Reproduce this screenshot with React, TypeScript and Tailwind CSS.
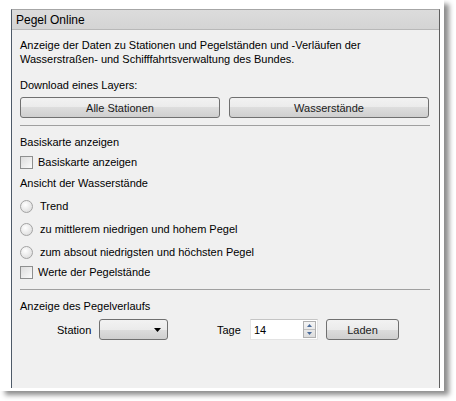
import React from "react";

const font = { fontFamily: '"Liberation Sans", Arial, sans-serif' };

function Radio({ label }: { label: string }) {
  return (
    <div className="mt-[3px] flex h-[20px] items-center gap-[7px]">
      <span className="h-[13px] w-[13px] shrink-0 rounded-full border border-[#a3a3a3] bg-[radial-gradient(circle_at_40%_35%,#ffffff,#d6d6d6)]" />
      <span>{label}</span>
    </div>
  );
}

function Check({ label }: { label: string }) {
  return (
    <div className="flex h-[20px] items-center gap-[5px]">
      <span className="h-[13px] w-[13px] shrink-0 border border-[#8e8f8f] bg-[linear-gradient(135deg,#dcdcdc,#fbfbfb)]" />
      <span>{label}</span>
    </div>
  );
}

function WinButton({ label, className }: { label: string; className: string }) {
  return (
    <button
      className={
        "flex items-center justify-center rounded-[3px] border border-[#707070] bg-[linear-gradient(to_bottom,#f2f2f2_0%,#ebebeb_50%,#dddddd_50%,#cfcfcf_100%)] text-[#1b1b1b] " +
        className
      }
    >
      {label}
    </button>
  );
}

export default function App() {
  return (
    <div className="h-[401px] w-[456px] bg-white text-[11px] leading-[14px] text-black" style={font}>
      <div className="h-[391px] w-[444px] bg-white pl-[11px] pt-[9px] shadow-[5px_4px_5px_rgba(0,0,0,0.45)]">
        <div className="flex h-[379px] w-[429px] flex-col border-l border-r border-t border-l-[#4e5a68] border-r-[#5e5e5e] border-t-[#a6a6a6] bg-[#f0f0f0]">
          {/* Title */}
          <div className="flex h-[20px] items-center border-b border-[#b8b8b8] bg-[linear-gradient(to_bottom,#dcdcdc,#d4d4d4)] pl-[4px] text-[12px]">
            Pegel Online
          </div>

          <div className="flex flex-col pl-[8px] pr-[9px]">
            <p className="mt-[8px]">
              Anzeige der Daten zu Stationen und Pegelständen und -Verläufen der
              <br />
              Wasserstraßen- und Schifffahrtsverwaltung des Bundes.
            </p>
            <div className="mt-[12px] h-[14px]">Download eines Layers:</div>

            <div className="mt-[5px] flex gap-[9px]">
              <WinButton label="Alle Stationen" className="h-[21px] w-[200px]" />
              <WinButton label="Wasserstände" className="h-[21px] w-[200px]" />
            </div>

            <div className="mt-[7px] h-px w-[410px] bg-[#a0a0a0]" />

            <div className="mt-[6px] flex h-[20px] items-center">Basiskarte anzeigen</div>
            <Check label="Basiskarte anzeigen" />
            <div className="mt-[1px] flex h-[20px] items-center">Ansicht der Wasserstände</div>
            <Radio label="Trend" />
            <Radio label="zu mittlerem niedrigen und hohem Pegel" />
            <Radio label="zum absout niedrigsten und höchsten Pegel" />
            <Check label="Werte der Pegelstände" />

            <div className="mt-[7px] h-px w-[410px] bg-[#a0a0a0]" />

            <div className="mt-[6px] flex h-[20px] items-center">Anzeige des Pegelverlaufs</div>

            <div className="mt-[3px] flex h-[21px] items-center">
              <span className="ml-[37px] w-[35px]">Station</span>
              <div className="ml-[7px] flex h-[21px] w-[69px] items-center justify-end rounded-[3px] border border-[#707070] bg-[linear-gradient(to_bottom,#f2f2f2_0%,#ebebeb_50%,#dddddd_50%,#cfcfcf_100%)] pr-[6px]">
                <svg width="7" height="4" viewBox="0 0 7 4">
                  <path d="M0 0 H7 L3.5 4 Z" fill="#000" />
                </svg>
              </div>
              <span className="ml-[49px] w-[26px]">Tage</span>
              <div className="ml-[7px] flex h-[21px] w-[68px] items-center border border-[#e3e3e3] border-t-[#c5c5c5] bg-white">
                <span className="ml-[3px] flex-1">14</span>
                <div className="mr-[1px] flex h-[17px] w-[13px] flex-col border border-[#b0b0b0] bg-[linear-gradient(to_bottom,#f4f4f4,#dedede)]">
                  <div className="flex flex-1 items-center justify-center border-b border-[#c0c0c0]">
                    <svg width="5" height="3" viewBox="0 0 5 3">
                      <path d="M0 3 L2.5 0 L5 3 Z" fill="#4a6b9a" />
                    </svg>
                  </div>
                  <div className="flex flex-1 items-center justify-center">
                    <svg width="5" height="3" viewBox="0 0 5 3">
                      <path d="M0 0 H5 L2.5 3 Z" fill="#4a6b9a" />
                    </svg>
                  </div>
                </div>
              </div>
              <WinButton label="Laden" className="ml-[8px] h-[21px] w-[73px]" />
            </div>
          </div>
        </div>
      </div>
    </div>
  );
}
